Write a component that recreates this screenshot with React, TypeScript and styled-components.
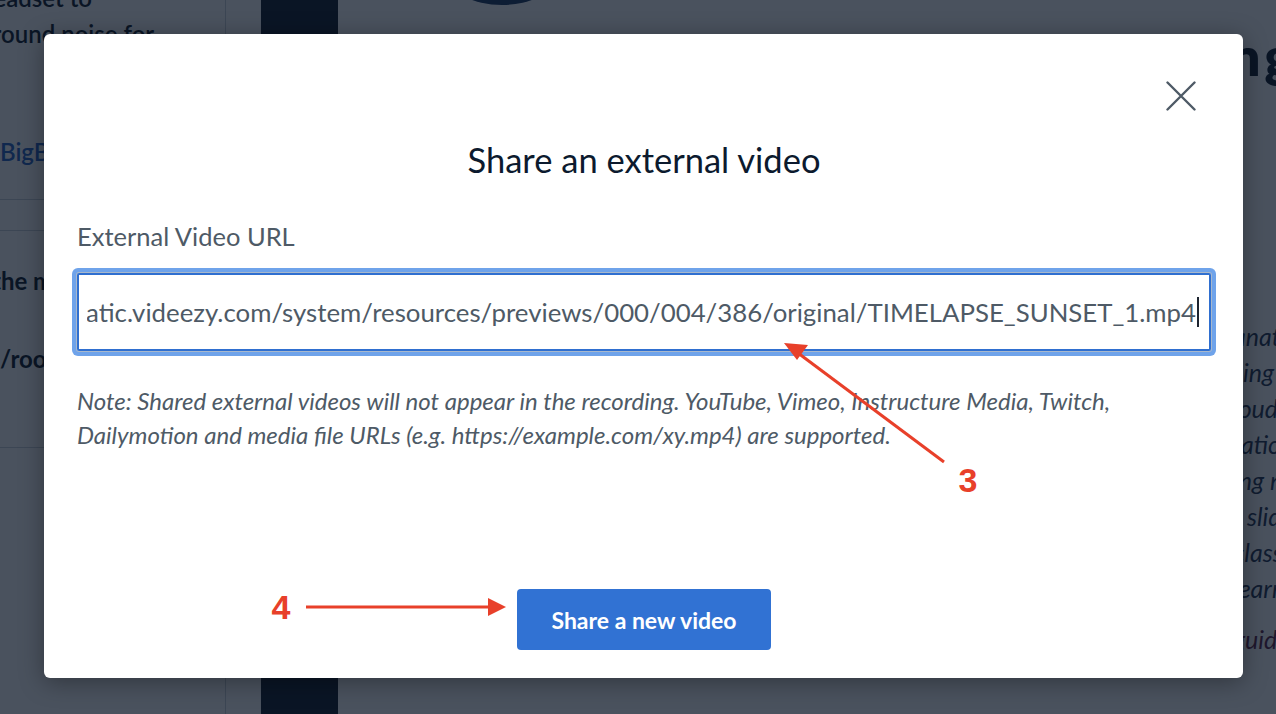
import React from "react";
import styled, { createGlobalStyle } from "styled-components";

const Global = createGlobalStyle`
  html, body { margin: 0; padding: 0; }
  body {
    width: 1276px;
    height: 714px;
    overflow: hidden;
    background: #ffffff;
    font-family: Lato, "Open Sans", sans-serif;
  }
`;

const Page = styled.div`
  position: relative;
  display: flex;
  width: 1276px;
  height: 714px;
  overflow: hidden;
  background: #ffffff;
`;

const Sidebar = styled.aside`
  flex: 0 0 265px;
  margin-left: -40px;
  border-right: 1px solid #c9d0d8;
  display: flex;
  flex-direction: column;
  color: #0b1526;
`;

const SideBlock = styled.div<{ $h: number; $line?: boolean }>`
  height: ${(p) => p.$h}px;
  border-bottom: ${(p) => (p.$line ? "1px solid #c9d0d8" : "none")};
  padding-left: 40px;
  box-sizing: border-box;
`;

const SideText = styled.p<{ $blue?: boolean; $bold?: boolean; $mt?: number; $indent?: number }>`
  margin: ${(p) => p.$mt ?? 0}px 0 0 ${(p) => p.$indent ?? 0}px;
  font-size: 24px;
  line-height: 36px;
  font-weight: ${(p) => (p.$bold ? 700 : 600)};
  color: ${(p) => (p.$blue ? "#1f5fc2" : "#0b1526")};
  white-space: nowrap;
`;

const Strip = styled.div`
  flex: 0 0 77px;
  margin-left: 35px;
  background: #0b1526;
`;

const Main = styled.main`
  flex: 1;
  display: flex;
  flex-direction: column;
  padding-left: 110px;
  min-width: 0;
`;

const Logo = styled.div`
  width: 108px;
  height: 60px;
  margin-top: -55px;
  border-radius: 50%;
  background: #16325e;
`;

const Heading = styled.h1`
  margin: 21px 0 0 16px;
  font-size: 52px;
  line-height: 60px;
  font-weight: 800;
  color: #0b1526;
  white-space: nowrap;
  letter-spacing: 4px;
`;

const SideCopy = styled.div`
  margin: 232px 0 0 785px;
  font-style: italic;
  font-size: 25px;
  line-height: 36px;
  color: #22314d;
  white-space: nowrap;
`;

const SideCopyEnd = styled.div`
  margin-top: 15px;
  color: #5a1c44;
`;

const Overlay = styled.div`
  position: absolute;
  inset: 0;
  background: rgba(11, 21, 38, 0.74);
`;

const Modal = styled.div`
  position: absolute;
  left: 44px;
  top: 34px;
  width: 1199px;
  height: 644px;
  box-sizing: border-box;
  background: #ffffff;
  border-radius: 6px;
  box-shadow: 0 4px 24px rgba(0, 0, 0, 0.35);
  display: flex;
  flex-direction: column;
  padding: 0 32px 0 33px;
`;

const CloseRow = styled.div`
  display: flex;
  justify-content: flex-end;
  padding-top: 46px;
  margin-right: 14px;
`;

const CloseButton = styled.button`
  width: 32px;
  height: 32px;
  padding: 0;
  border: none;
  background: transparent;
  display: flex;
  align-items: center;
  justify-content: center;
  cursor: pointer;
`;

const Title = styled.h2`
  margin: 26px 0 0;
  text-align: center;
  font-size: 34.5px;
  line-height: 44px;
  font-weight: 400;
  color: #0c1a2e;
`;

const Label = styled.label`
  display: block;
  margin-top: 38px;
  font-size: 25.5px;
  line-height: 32px;
  color: #4e5a66;
`;

const InputBox = styled.div`
  margin-top: 21px;
  height: 78px;
  box-sizing: border-box;
  border: 2px solid #2f6fd0;
  border-radius: 2px;
  box-shadow: 0 0 0 1px #a8b8cc, 0 0 0 5px #6fa3ea;
  padding: 0 10px 0 8px;
  display: flex;
  align-items: center;
`;

const InputViewport = styled.div`
  flex: 1;
  min-width: 0;
  overflow: hidden;
  display: flex;
  justify-content: flex-end;
  align-items: center;
  white-space: nowrap;
  font-size: 25.8px;
  color: #4e5a66;
`;

const Caret = styled.span`
  flex: 0 0 auto;
  width: 2px;
  height: 30px;
  margin-left: 1px;
  background: #1d2430;
`;

const Note = styled.p`
  margin: 33px 0 0;
  font-style: italic;
  font-size: 24px;
  line-height: 34px;
  color: #4e5a66;
`;

const Footer = styled.div`
  margin-top: auto;
  padding-bottom: 28px;
  display: flex;
  justify-content: center;
`;

const PrimaryButton = styled.button`
  width: 254px;
  height: 61px;
  border: none;
  border-radius: 4px;
  background: #3172d3;
  color: #ffffff;
  font-family: Lato, "Open Sans", sans-serif;
  font-size: 23px;
  font-weight: 700;
  cursor: pointer;
`;

const Annotations = styled.svg`
  position: absolute;
  inset: 0;
  width: 1276px;
  height: 714px;
  pointer-events: none;
`;

const URL_TEXT =
  "https://static.videezy.com/system/resources/previews/000/004/386/original/TIMELAPSE_SUNSET_1.mp4";

export default function App() {
  return (
    <>
      <Global />
      <Page>
        <Sidebar>
          <SideBlock $h={200} $line>
            <SideText $mt={-20} $indent={-20}>headset to</SideText>
            <SideText $indent={-20}>ground noise for</SideText>
            <SideText $blue $mt={82}>
              BigBlueButton
            </SideText>
          </SideBlock>
          <SideBlock $h={31} $line />
          <SideBlock $h={217} $line>
            <SideText $bold $mt={32} $indent={-8}>
              the meeting
            </SideText>
            <SideText $bold $mt={42}>
              /room link
            </SideText>
          </SideBlock>
        </Sidebar>
        <Strip />
        <Main>
          <Logo />
          <Heading>Welcome LEARN CRT Teaching</Heading>
          <SideCopy>
            <div>anatomy</div>
            <div>sing it</div>
            <div>loud</div>
            <div>ration</div>
            <div>ing n</div>
            <div>r slides</div>
            <div>class</div>
            <div>learn</div>
            <SideCopyEnd>guide</SideCopyEnd>
          </SideCopy>
        </Main>
        <Overlay />
        <Modal role="dialog" aria-label="Share an external video">
          <CloseRow>
            <CloseButton aria-label="Close">
              <svg width="30" height="30" viewBox="0 0 30 30">
                <path
                  d="M1.5 1.5 L28.5 28.5 M28.5 1.5 L1.5 28.5"
                  stroke="#4e5a66"
                  strokeWidth="2.4"
                  strokeLinecap="round"
                  fill="none"
                />
              </svg>
            </CloseButton>
          </CloseRow>
          <Title>Share an external video</Title>
          <Label>External Video URL</Label>
          <InputBox>
            <InputViewport>
              <span>{URL_TEXT}</span>
              <Caret />
            </InputViewport>
          </InputBox>
          <Note>
            Note: Shared external videos will not appear in the recording. YouTube, Vimeo,
            Instructure Media, Twitch, Dailymotion and media file URLs (e.g.
            https://example.com/xy.mp4) are supported.
          </Note>
          <Footer>
            <PrimaryButton>Share a new video</PrimaryButton>
          </Footer>
        </Modal>
        <Annotations viewBox="0 0 1276 714">
          <line x1="944" y1="462" x2="798" y2="353" stroke="#e8402a" strokeWidth="3" />
          <polygon points="784,343 808,345 797,360" fill="#e8402a" />
          <text
            x="968"
            y="492"
            textAnchor="middle"
            fontFamily="'Liberation Sans', Arial, sans-serif"
            fontWeight="700"
            fontSize="34"
            fill="#e8402a"
          >
            3
          </text>
          <line x1="306" y1="607" x2="492" y2="607" stroke="#e8402a" strokeWidth="3" />
          <polygon points="506,607 488,598 488,616" fill="#e8402a" />
          <text
            x="281"
            y="619"
            textAnchor="middle"
            fontFamily="'Liberation Sans', Arial, sans-serif"
            fontWeight="700"
            fontSize="34"
            fill="#e8402a"
          >
            4
          </text>
        </Annotations>
      </Page>
    </>
  );
}
